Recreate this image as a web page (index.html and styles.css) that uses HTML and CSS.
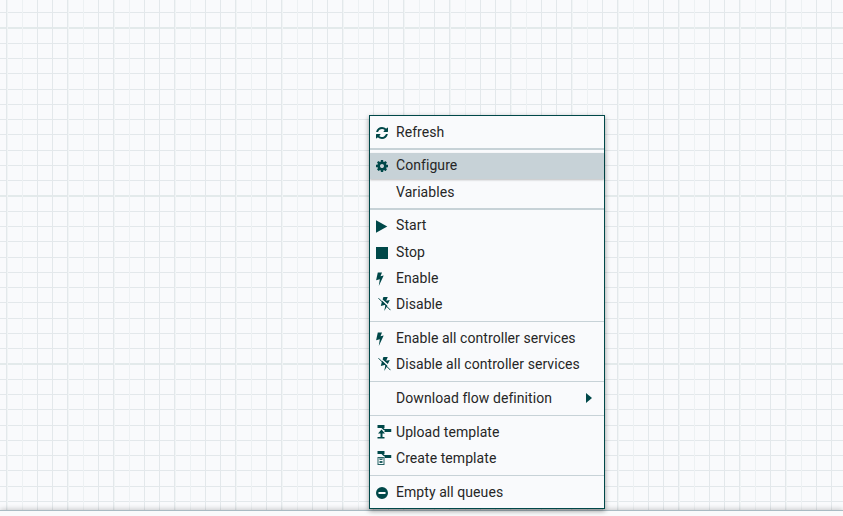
FILE: index.html
```html
<!DOCTYPE html>
<html lang="en">
<head>
<meta charset="utf-8">
<title>Flow canvas</title>
<link rel="stylesheet" href="styles.css">
</head>
<body>
<svg class="defs" width="0" height="0" aria-hidden="true">
  <symbol id="refresh" viewBox="0 0 1536 1536"><path d="M1511 928q0 5-1 7-64 268-268 434.500T764 1536q-146 0-282.500-55T238 1324l-129 129q-19 19-45 19t-45-19-19-45V960q0-26 19-45t45-19h448q26 0 45 19t19 45-19 45l-137 137q71 66 161 102t187 36q134 0 250-65t186-179q11-17 53-117 8-23 30-23h192q13 0 22.500 9.500t9.500 22.500zm25-800v448q0 26-19 45t-45 19h-448q-26 0-45-19t-19-45 19-45l138-138Q969 256 768 256q-134 0-250 65T332 500q-11 17-53 117-8 23-30 23H50q-13 0-22.500-9.500T18 608v-7q65-268 270-434.500T768 0q146 0 284 55.500T1297 212l130-129q19-19 45-19t45 19 19 45z"/></symbol>
  <symbol id="gear" viewBox="0 0 1536 1536"><path d="M1024 768q0-106-75-181t-181-75-181 75-75 181 75 181 181 75 181-75 75-181zm512-109v222q0 12-8 23t-20 13l-185 28q-19 54-39 91 35 50 107 138 10 12 10 25t-9 23q-27 37-99 108t-94 71q-12 0-26-9l-138-108q-44 23-91 38-16 136-29 186-7 28-36 28H657q-14 0-24.500-8.500T621 1506l-28-184q-49-16-90-37l-141 107q-10 9-25 9-14 0-25-11-126-114-165-168-7-10-7-23 0-12 8-23 15-21 51-66.500t54-70.500q-27-50-41-99L29 913q-13-2-21-12.500T0 877V655q0-12 8-23t19-13l186-28q14-46 39-92-40-57-107-138-10-12-10-24 0-10 9-23 26-36 98.500-107.500T337 135q13 0 26 10l138 107q44-23 91-38 16-136 29-186 7-28 36-28h222q14 0 24.500 8.500T915 30l28 184q49 16 90 37l142-107q9-9 24-9 13 0 25 10 129 119 165 170 7 8 7 22 0 12-8 23-15 21-51 66.500t-54 70.500q26 50 41 98l183 28q13 2 21 12.500t8 23.500z"/></symbol>
  <symbol id="play" viewBox="0 0 12 13"><path d="M0 .3 11.300 6.500 0 12.700z"/></symbol>
  <symbol id="stop" viewBox="0 0 12 12"><path d="M0 0h12v12H0z"/></symbol>
  <symbol id="bolt" viewBox="0 0 8 14"><path d="M1.800.4h4.200L4.500 4.300 7.700 3.600 2.800 14l1-6.700L.1 8.300z"/></symbol>
  <symbol id="unbolt" viewBox="0 0 13 14"><path d="M5.400 0h4.400L8.200 3.700l3.600-.6-2 3.900-5.200-4.600zM4.100 3.700l5.300 5L6.200 14l1.300-6.200-4.700 1.100z"/><path class="slash" d="M.5 1.200 12.500 13.200"/></symbol>
  <symbol id="upload" viewBox="0 0 15 14"><path d="M1 0h7v3H1zM8 4h7v3H8zM5 3h2l2 2H7zM5 4.500 8.500 8.500H6V12H4V8.500H1.500zM1 12h7v1.500H1z"/></symbol>
  <symbol id="create" viewBox="0 0 15 14"><path d="M1 0h7v3H1zM8 4h7v3H8zM5 3h2l2 2H7z"/><path fill-rule="evenodd" opacity=".85" d="M1 6h6l1 1v7H1zM2 7v6h5V7H6v2H3V7zM4 7v1h1V7zM3 10h3v2H3z"/></symbol>
  <symbol id="minus" viewBox="0 0 12 12"><path fill-rule="evenodd" d="M6 0a6 6 0 1 1 0 12A6 6 0 0 1 6 0zM2.500 5v2h7V5z"/></symbol>
</svg>
<main class="canvas">
  <svg class="grid" width="843" height="510" aria-hidden="true">
    <defs><pattern id="cells" x="6" y="27" width="168" height="168" patternUnits="userSpaceOnUse">
      <path class="major" d="M0 0h168v2H0z"/>
      <path class="line" d="M0 16h168v1H0zM0 31h168v1H0zM0 46h168v1H0zM0 62h168v1H0zM0 77h168v1H0zM0 92h168v1H0zM0 107h168v1H0zM0 123h168v1H0zM0 138h168v1H0zM0 153h168v1H0z"/>
      <path class="line" d="M0 0h1v168H0zM31 0h1v168h-1zM46 0h1v168h-1zM61 0h1v168h-1zM92 0h1v168h-1zM107 0h1v168h-1zM138 0h1v168h-1zM153 0h1v168h-1z"/>
      <path class="faint" d="M1 0h1v168H1zM62 0h1v168h-1zM108 0h1v168h-1z"/>
      <path class="light" d="M16 0h1v168h-1zM77 0h1v168h-1zM123 0h1v168h-1z"/>
    </pattern></defs>
    <rect width="843" height="510" fill="url(#cells)"/>
  </svg>
</main>
<footer class="breadcrumbs"></footer>
<nav class="menu">
  <div class="item"><svg class="icon"><use href="#refresh" width="12" height="12" y="2"/></svg><span>Refresh</span></div>
  <hr class="thick">
  <div class="item raised active"><svg class="icon"><use href="#gear" width="12" height="12" y="2"/></svg><span>Configure</span></div>
  <div class="item"><span class="icon"></span><span>Variables</span></div>
  <hr class="thick">
  <div class="item raised"><svg class="icon"><use href="#play" width="12" height="13" y="2"/></svg><span>Start</span></div>
  <div class="item"><svg class="icon"><use href="#stop" width="12" height="12" y="2"/></svg><span>Stop</span></div>
  <div class="item"><svg class="icon"><use href="#bolt" width="8" height="14" y="1"/></svg><span>Enable</span></div>
  <div class="item"><svg class="icon"><use href="#unbolt" width="13" height="14" x="2"/></svg><span>Disable</span></div>
  <hr>
  <div class="item"><svg class="icon"><use href="#bolt" width="8" height="14" y="1"/></svg><span>Enable all controller services</span></div>
  <div class="item"><svg class="icon"><use href="#unbolt" width="13" height="14" x="2"/></svg><span>Disable all controller services</span></div>
  <hr>
  <div class="item"><span class="icon"></span><span>Download flow definition</span><i class="arrow"></i></div>
  <hr>
  <div class="item"><svg class="icon"><use href="#upload" width="15" height="14" x="0.500"/></svg><span>Upload template</span></div>
  <div class="item"><svg class="icon"><use href="#create" width="15" height="14" x="0.500"/></svg><span>Create template</span></div>
  <hr>
  <div class="item"><svg class="icon"><use href="#minus" width="12" height="12" y="2"/></svg><span>Empty all queues</span></div>
</nav>
</body>
</html>
```
FILE: styles.css
```css
* { box-sizing: border-box; }
body {
  margin: 0;
  height: 516px;
  display: flex;
  flex-direction: column;
  overflow: hidden;
  background: #f9fafb;
  color: #262626;
  font: 14px/26px Roboto, "Liberation Sans", sans-serif;
}
.defs { position: absolute; }
.canvas { height: 510px; background: #f9fafc; overflow: hidden; }
.grid { display: block; }
.line { fill: #e3e8eb; }
.major { fill: #e3eaeb; }
.light { fill: #edf1f3; }
.faint { fill: #f0f4f5; }
.breadcrumbs {
  height: 6px;
  border-top: 1px solid #aabbc3;
  background: #f9fafb;
  box-shadow: 0 -1px 5px rgba(0, 0, 0, .2);
}
.menu {
  position: absolute;
  left: 369px;
  top: 115px;
  width: 236px;
  padding: 3px 0;
  border: 1px solid #004849;
  background: #f9fafc;
  box-shadow: 0 2px 5px rgba(0, 0, 0, .4);
}
.item {
  display: flex;
  align-items: center;
  height: 26px;
  padding: 0 12px 0 6px;
  letter-spacing: .065px;
  white-space: nowrap;
}
.raised { padding-bottom: 2px; }
.active { background: #c7d2d7; box-shadow: 0 1px 2px rgba(0, 0, 0, .25); }
.icon {
  width: 20px;
  height: 14px;
  flex: none;
  overflow: visible;
  fill: #004849;
}
.slash { stroke: #004849; stroke-width: 1; fill: none; }
.arrow {
  margin-left: auto;
  border: solid transparent;
  border-width: 5px 0 5px 6px;
  border-left-color: #004849;
}
hr { height: 1px; margin: 4px 0 3px; border: 0; background: #c7d2d7; }
.thick { height: 2px; margin: 3px 0; }
```
